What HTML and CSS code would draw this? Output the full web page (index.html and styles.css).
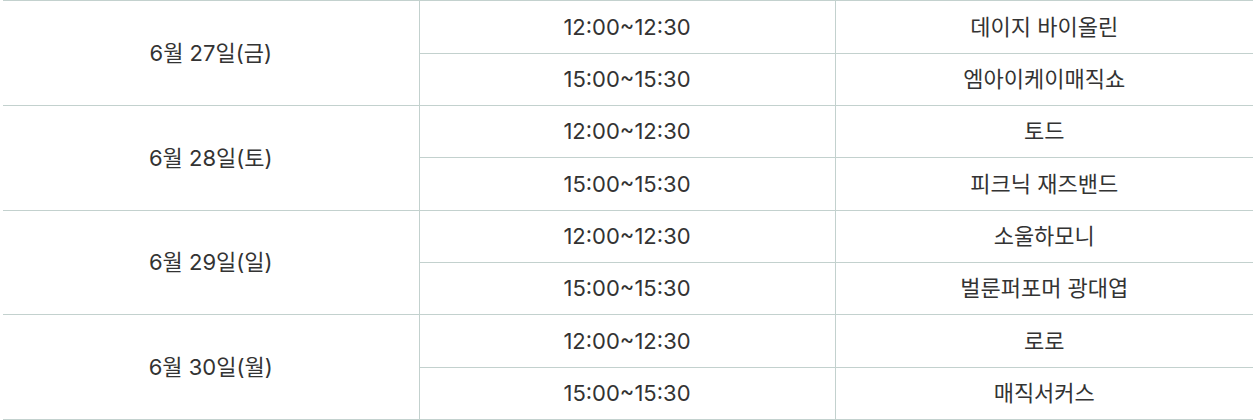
FILE: index.html
```html
<!DOCTYPE html>
<html lang="ko">
<head>
<meta charset="utf-8">
<link rel="stylesheet" href="styles.css">
</head>
<body>
<div class="wrap">
<table class="schedule">
  <colgroup><col class="c1"><col class="c2"><col class="c3"></colgroup>
  <tbody>
    <tr class="tall"><td rowspan="2" class="date">6월 27일(금)</td><td>12:00~12:30</td><td>데이지 바이올린</td></tr>
    <tr class="short"><td>15:00~15:30</td><td>엠아이케이매직쇼</td></tr>
    <tr class="short"><td rowspan="2" class="date">6월 28일(토)</td><td>12:00~12:30</td><td>토드</td></tr>
    <tr class="tall"><td>15:00~15:30</td><td>피크닉 재즈밴드</td></tr>
    <tr class="short"><td rowspan="2" class="date">6월 29일(일)</td><td>12:00~12:30</td><td>소울하모니</td></tr>
    <tr class="short"><td>15:00~15:30</td><td>벌룬퍼포머 광대엽</td></tr>
    <tr class="tall"><td rowspan="2" class="date">6월 30일(월)</td><td>12:00~12:30</td><td>로로</td></tr>
    <tr class="short"><td>15:00~15:30</td><td>매직서커스</td></tr>
  </tbody>
</table>
</div>
</body>
</html>
```

FILE: styles.css
```css
html, body {
  margin: 0;
  padding: 0;
  background: #ffffff;
}
.wrap {
  padding-left: 3px;
}
.schedule {
  width: 1250px;
  border-collapse: collapse;
  table-layout: fixed;
  font-family: Inter, "Noto Sans CJK KR", sans-serif;
  font-size: 22px;
  color: #333333;
}
.c1 { width: 416px; }
.c2 { width: 416px; }
.c3 { width: 418px; }
.schedule td {
  border-top: 1px solid #c3d1ce;
  border-bottom: 1px solid #c3d1ce;
  border-left: 1px solid #c3d1ce;
  text-align: center;
  vertical-align: middle;
  padding: 0;
  line-height: 1.3;
}
.schedule tr td:first-child.date {
  border-left: none;
}
.tall td { height: 52px; }
.short td { height: 51px; }
```
